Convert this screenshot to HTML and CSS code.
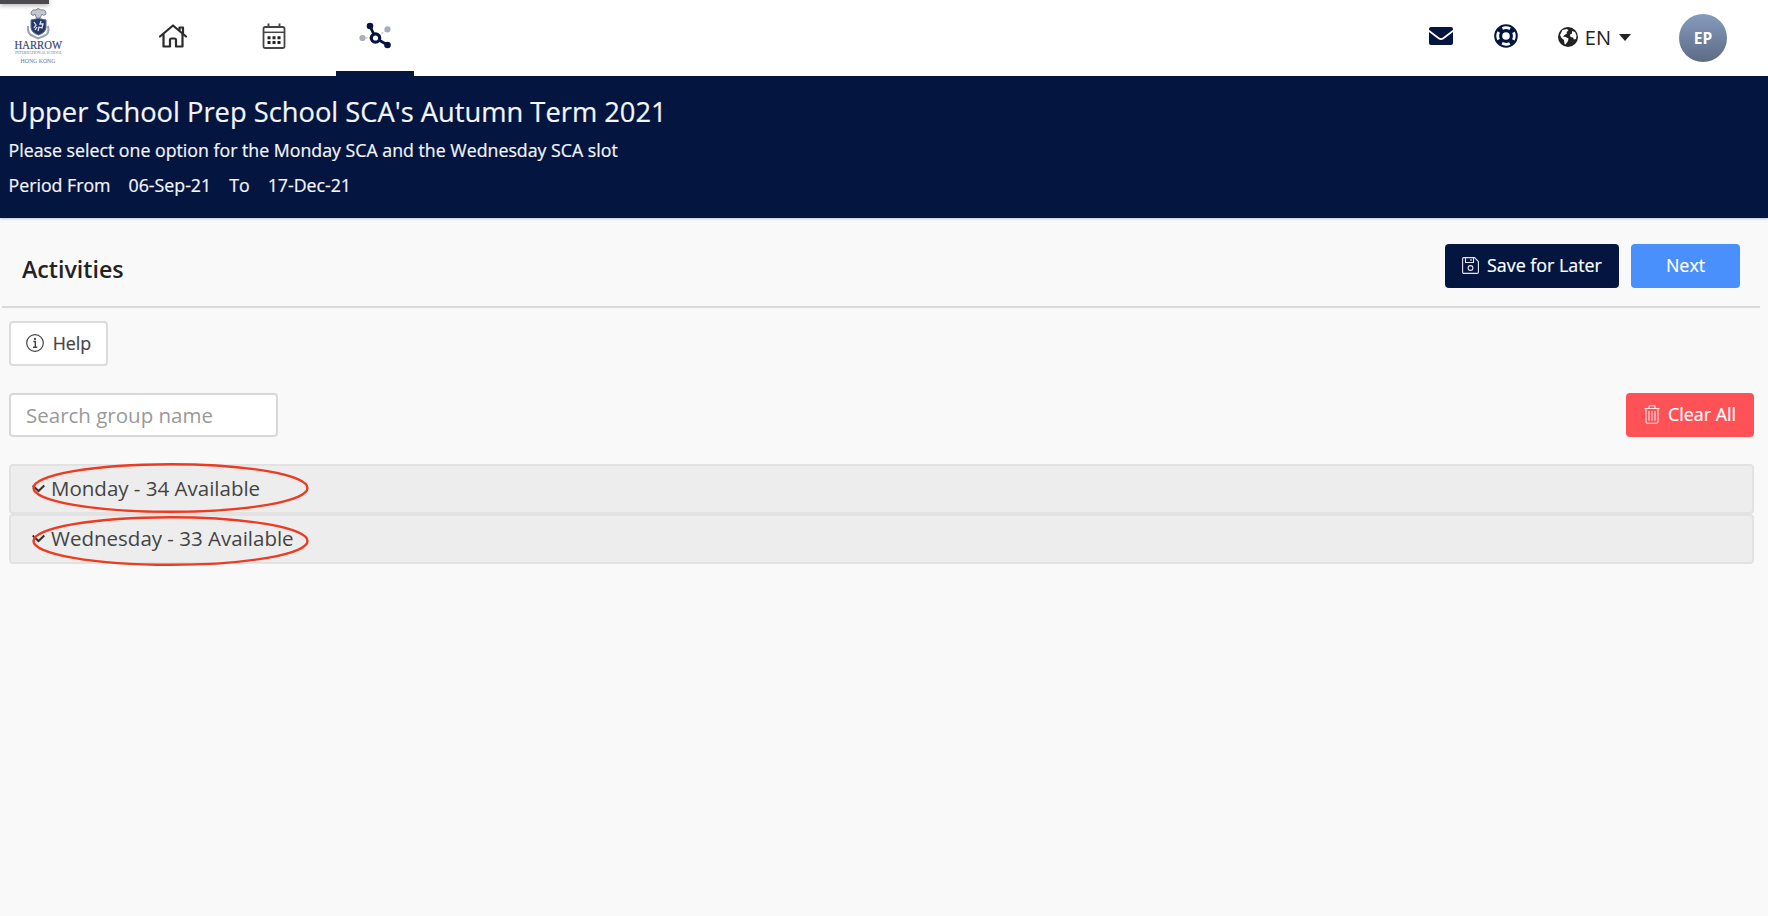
FILE: index.html
```html
<!DOCTYPE html>
<html lang="en">
<head>
   <meta charset="UTF-8">
   <meta name="viewport" content="width=device-width, initial-scale=1.0">
   <title>Activities</title>
   <link rel="stylesheet" href="styles.css">
</head>
<body>
   <header class="topbar">
      <div class="status-strip"></div>
      <a class="logo">
         <svg width="80" height="76" viewBox="0 0 80 76">
            <path d="M31 14 Q31 9 36 10 L38 8.500 L41 10 Q46 9 46 14 Q43 17 42 14 L40 18 H36.500 L35 14 Q33 17 31 14Z" fill="#c3c7d0" stroke="#7f8797" stroke-width="1"/>
            <path d="M28 26 Q27 34 33 36 L38 38.500 L44 36 Q50 34 48 26" fill="none" stroke="#9aa2b4" stroke-width="2"/>
            <path d="M31 20 Q38 17 46 20 V28 Q45 33 38.500 35 Q32 33 31 28Z" fill="#26376a" stroke="#5c6a8e" stroke-width="1"/>
            <path d="M34 22 L36 25 L34 28 M41 21 L40 24 L43 24 L42 28 L39 27 L38 31 M35 30 L37 27" fill="none" stroke="#dfe4ef" stroke-width="1.300"/>
            <text class="logo-name" x="14.500" y="48.500" textLength="47.500" lengthAdjust="spacingAndGlyphs">HARROW</text>
            <text class="logo-small" x="15" y="54" textLength="47" lengthAdjust="spacingAndGlyphs">INTERNATIONAL SCHOOL</text>
            <text class="logo-city" x="20.500" y="63.200" textLength="35" lengthAdjust="spacingAndGlyphs">HONG KONG</text>
         </svg>
      </a>
      <nav class="main-nav">
         <a class="nav-item">
            <svg width="30" height="26" viewBox="0 0 30 26" fill="none" stroke="#2b2b2b" stroke-width="2.200" stroke-linejoin="round" stroke-linecap="round">
               <path d="M2 13.500 L15 2.500 L28 13.500"/>
               <path d="M5.500 11.500 V23.500 H12 V17 Q12 15.500 13.500 15.500 H16.500 Q18 15.500 18 17 V23.500 H24.500 V11.500"/>
               <path d="M21.500 7 V4.500 H25 V10"/>
            </svg>
         </a>
         <a class="nav-item">
            <svg width="24" height="28" viewBox="0 0 24 28">
               <rect x="1.500" y="5" width="21" height="21" rx="1.800" fill="none" stroke="#444" stroke-width="1.800"/>
               <path d="M2 10.300 H22" stroke="#444" stroke-width="1.500"/>
               <path d="M6.500 1.500 V5 M17.500 1.500 V5" stroke="#444" stroke-width="1.900"/>
               <path d="M5.500 15.700 H8.500 M10.500 15.700 H13.500 M15.500 15.700 H18.500 M5.500 20.500 H8.500 M10.500 20.500 H13.500 M15.500 20.500 H18.500" stroke="#222" stroke-width="3"/>
            </svg>
         </a>
         <a class="nav-item active">
            <svg width="34" height="30" viewBox="0 0 34 30">
               <path d="M4 17 H17 L29 9" fill="none" stroke="#c5c8d2" stroke-width="1.500" stroke-dasharray="2 1.500"/>
               <circle cx="4.500" cy="17" r="3.100" fill="#a9adba"/>
               <circle cx="29.500" cy="8.300" r="3.100" fill="#a9adba"/>
               <path d="M12 5 L17.500 17 L29.500 24" fill="none" stroke="#04153f" stroke-width="2.800"/>
               <circle cx="12" cy="5" r="3.300" fill="#04153f"/>
               <circle cx="29.500" cy="24" r="3.300" fill="#04153f"/>
               <circle cx="17.500" cy="17" r="4.200" fill="#fff" stroke="#04153f" stroke-width="3.200"/>
            </svg>
         </a>
      </nav>
      <div class="tools">
         <svg class="mail" width="24" height="18" viewBox="0 0 24 18">
            <path d="M2 0 H22 Q24 0 24 2 V2.800 L13.500 10.700 Q12 11.600 10.500 10.700 L0 2.800 V2 Q0 0 2 0Z" fill="#04153f"/>
            <path d="M0 5 L9.500 12.200 Q12 13.700 14.500 12.200 L24 5 V16 Q24 18 22 18 H2 Q0 18 0 16Z" fill="#04153f"/>
         </svg>
         <svg class="ring" width="24" height="24" viewBox="0 0 24 24" fill="none">
            <circle cx="12" cy="12" r="7.800" stroke="#04153f" stroke-width="8"/>
            <circle cx="12" cy="12" r="8.300" stroke="#fff" stroke-width="2.800" stroke-dasharray="8 5.040" stroke-dashoffset="4"/>
         </svg>
         <div class="language">
            <svg width="20" height="20" viewBox="0 0 20 20">
               <circle cx="10" cy="10" r="10" fill="#222"/>
               <path d="M4.500 3 L9 2 L10.500 3.500 L8.500 5 L9 6.500 L6.500 8 L5 9.500 L7.500 10 L10.500 11.500 L10 14 L7.500 17.500 L6.500 17 L6 13 L3.500 11 L2 8 Z M14 4 L17 5 L18.500 8.500 L18 12 L16 12.500 L15 10.500 L12.500 10 L12 7.500 L14 6.500Z" fill="#fff"/>
            </svg>
            <span>EN</span>
            <i class="caret"></i>
         </div>
         <div class="avatar">EP</div>
      </div>
   </header>

   <section class="banner">
      <h1>Upper School Prep School SCA's Autumn Term 2021</h1>
      <p>Please select one option for the Monday SCA and the Wednesday SCA slot</p>
      <p class="period"><span>Period From</span><span>06-Sep-21</span><span>To</span><span>17-Dec-21</span></p>
   </section>

   <main>
      <div class="title-row">
         <h2>Activities</h2>
         <button class="btn save">
            <svg width="17" height="17" viewBox="0 0 17 17" fill="none" stroke="#e4e7ef" stroke-width="1.100">
               <path d="M2 .6 H12.500 L16.400 4.500 V15 Q16.400 16.400 15 16.400 H2 Q.6 16.400 .6 15 V2 Q.6 .6 2 .6Z"/>
               <path d="M3.500 .6 V5.500 H11.500 V.6 M9 2 V4"/>
               <circle cx="8.500" cy="11" r="2.400"/>
            </svg>
            Save for Later
         </button>
         <button class="btn next">Next</button>
      </div>

      <div class="content">
         <button class="btn help">
            <svg width="18" height="18" viewBox="0 0 18 18" fill="none" stroke="#444">
               <circle cx="9" cy="9" r="8.300" stroke-width="1.200"/>
               <path d="M7.300 7.500 H9.300 V13 M7 13.200 H11.300" stroke-width="1.400"/>
               <circle cx="9" cy="4.900" r="1.100" fill="#444" stroke="none"/>
            </svg>
            Help
         </button>

         <div class="search-row">
            <input type="text" placeholder="Search group name">
            <button class="btn clear">
               <svg width="16" height="19" viewBox="0 0 16 19" fill="none" stroke="#ffe3e3" stroke-width="1.100">
                  <path d="M.5 3.500 H15.500 M5 3.500 V1.500 Q5 .7 5.800 .7 H10.200 Q11 .7 11 1.500 V3.500"/>
                  <path d="M2 3.500 V16.500 Q2 18.200 3.500 18.200 H12.500 Q14 18.200 14 16.500 V3.500"/>
                  <path d="M5 6 V15.800 M8 6 V15.800 M11 6 V15.800"/>
               </svg>
               Clear All
            </button>
         </div>

         <div class="group">
            <svg class="chevron" width="13" height="9" viewBox="0 0 13 9"><path d="M.7 1.500 L6.500 7 L12.300 1.500" fill="none" stroke="#333" stroke-width="2"/></svg>
            <span>Monday - 34 Available</span>
            <svg class="mark" width="277" height="50" viewBox="0 0 277 50"><ellipse cx="138.500" cy="25" rx="137" ry="23.800"/></svg>
         </div>
         <div class="group">
            <svg class="chevron" width="13" height="9" viewBox="0 0 13 9"><path d="M.7 1.500 L6.500 7 L12.300 1.500" fill="none" stroke="#333" stroke-width="2"/></svg>
            <span>Wednesday - 33 Available</span>
            <svg class="mark second" width="277" height="50" viewBox="0 0 277 50"><ellipse cx="138.500" cy="25" rx="137" ry="23.800"/></svg>
         </div>
      </div>
   </main>
</body>
</html>
```
FILE: styles.css
```css
* {
   box-sizing: border-box;
}
body {
   margin: 0;
   min-height: 100vh;
   background: #f9f9f9;
   font-family: "Open Sans", "Noto Sans", sans-serif;
   font-size: 17.75px;
   color: #222;
}
h1, h2, p {
   margin: 0;
}
.topbar {
   position: relative;
   height: 76px;
   background: #fff;
   display: flex;
}
.status-strip {
   position: absolute;
   left: 0;
   top: 0;
   width: 49px;
   height: 4px;
   background: #4b4b4f;
   box-shadow: 0 1px 5px rgba(0, 0, 0, 0.4);
}
.logo {
   width: 134px;
}
.logo-name {
   font-family: "Liberation Serif", serif;
   font-size: 11.5px;
   fill: #35446f;
   stroke: #35446f;
   stroke-width: 0.2px;
}
.logo-small {
   font-family: "Liberation Serif", serif;
   font-size: 4px;
   fill: #6d7793;
}
.logo-city {
   font-family: "Liberation Serif", serif;
   font-size: 5.5px;
   fill: #6d7793;
}
.main-nav {
   display: flex;
   flex: 1;
   gap: 23px;
}
.nav-item {
   width: 78px;
   height: 76px;
   padding-bottom: 5px;
   display: flex;
   align-items: center;
   justify-content: center;
}
.nav-item.active {
   border-bottom: 5px solid #04153f;
   padding-bottom: 0;
}
.tools {
   display: flex;
   align-items: center;
   padding-right: 41px;
}
.mail {
   margin-right: 41px;
   margin-bottom: 4px;
}
.ring {
   margin-right: 40px;
   margin-bottom: 4px;
}
.language {
   display: flex;
   align-items: center;
   font-size: 20px;
   margin-right: 48px;
   margin-bottom: 2px;
}
.language span {
   margin: 0 8px 0 7px;
}
.caret {
   border: 6px solid transparent;
   border-top: 7px solid #222;
   border-bottom: 0;
}
.avatar {
   width: 48px;
   height: 48px;
   margin-bottom: 1px;
   border-radius: 50%;
   background: linear-gradient(#869bbf, #5d6b84);
   color: #fff;
   font-size: 15.5px;
   font-weight: 700;
   display: flex;
   align-items: center;
   justify-content: center;
}
.banner {
   height: 142px;
   padding: 16px 8.500px 0;
   background: #04153f;
   color: #f4f6fb;
   box-shadow: 0 1px 2px #b9c4dc;
}
.banner h1 {
   font-size: 27.3px;
   font-weight: 400;
   line-height: 39px;
   padding-bottom: 2px;
   -webkit-text-stroke: 0.2px;
}
.banner p {
   line-height: 35px;
   -webkit-text-stroke: 0.2px;
}
.period {
   display: flex;
   gap: 18px;
}
.title-row {
   height: 90px;
   margin: 0 8px 0 2px;
   padding: 8px 20px 0;
   border-bottom: 2px solid #d9d9d9;
   display: flex;
   align-items: center;
   gap: 12px;
}
.title-row h2 {
   flex: 1;
   font-size: 23.2px;
   font-weight: 600;
   padding-top: 6px;
}
.btn {
   height: 44px;
   border: 0;
   border-radius: 4px;
   font-family: inherit;
   font-size: 17.85px;
   color: #fff;
   display: flex;
   align-items: center;
   justify-content: center;
   gap: 8px;
   padding: 0 0 2px;
   -webkit-text-stroke: 0.2px;
}
.save {
   width: 174px;
   background: #04153f;
}
.next {
   width: 109px;
   background: #4a90fc;
}
.content {
   padding: 13px 14px 0 9px;
}
.help {
   width: 99px;
   height: 45px;
   background: #fff;
   border: 2px solid #dcdcdc;
   color: #444;
   padding: 0 0 1px;
   gap: 9px;
}
.search-row {
   display: flex;
   justify-content: space-between;
   margin: 27px 0;
}
.search-row input {
   width: 269px;
   height: 44px;
   padding: 0 15px;
   border: 2px solid #d8d8d8;
   border-radius: 4px;
   background: #fff;
   font-family: inherit;
   font-size: 20.5px;
}
.search-row input::placeholder {
   color: #999;
}
.clear {
   width: 128px;
   background: #ff5257;
}
.group {
   position: relative;
   height: 50px;
   background: #ededed;
   border: 2px solid #e2e2e2;
   border-radius: 4px;
   display: flex;
   align-items: center;
   gap: 6px;
   padding: 0 0 2px 21px;
   font-size: 20.5px;
   color: #444;
}
/* hand drawn rings over the group names */
.mark {
   position: absolute;
   left: 21px;
   top: -3.5px;
   overflow: visible;
   z-index: 1;
}
.mark.second {
   top: 0;
}
.mark ellipse {
   fill: none;
   stroke: #ee3a20;
   stroke-width: 2.4px;
}
```
